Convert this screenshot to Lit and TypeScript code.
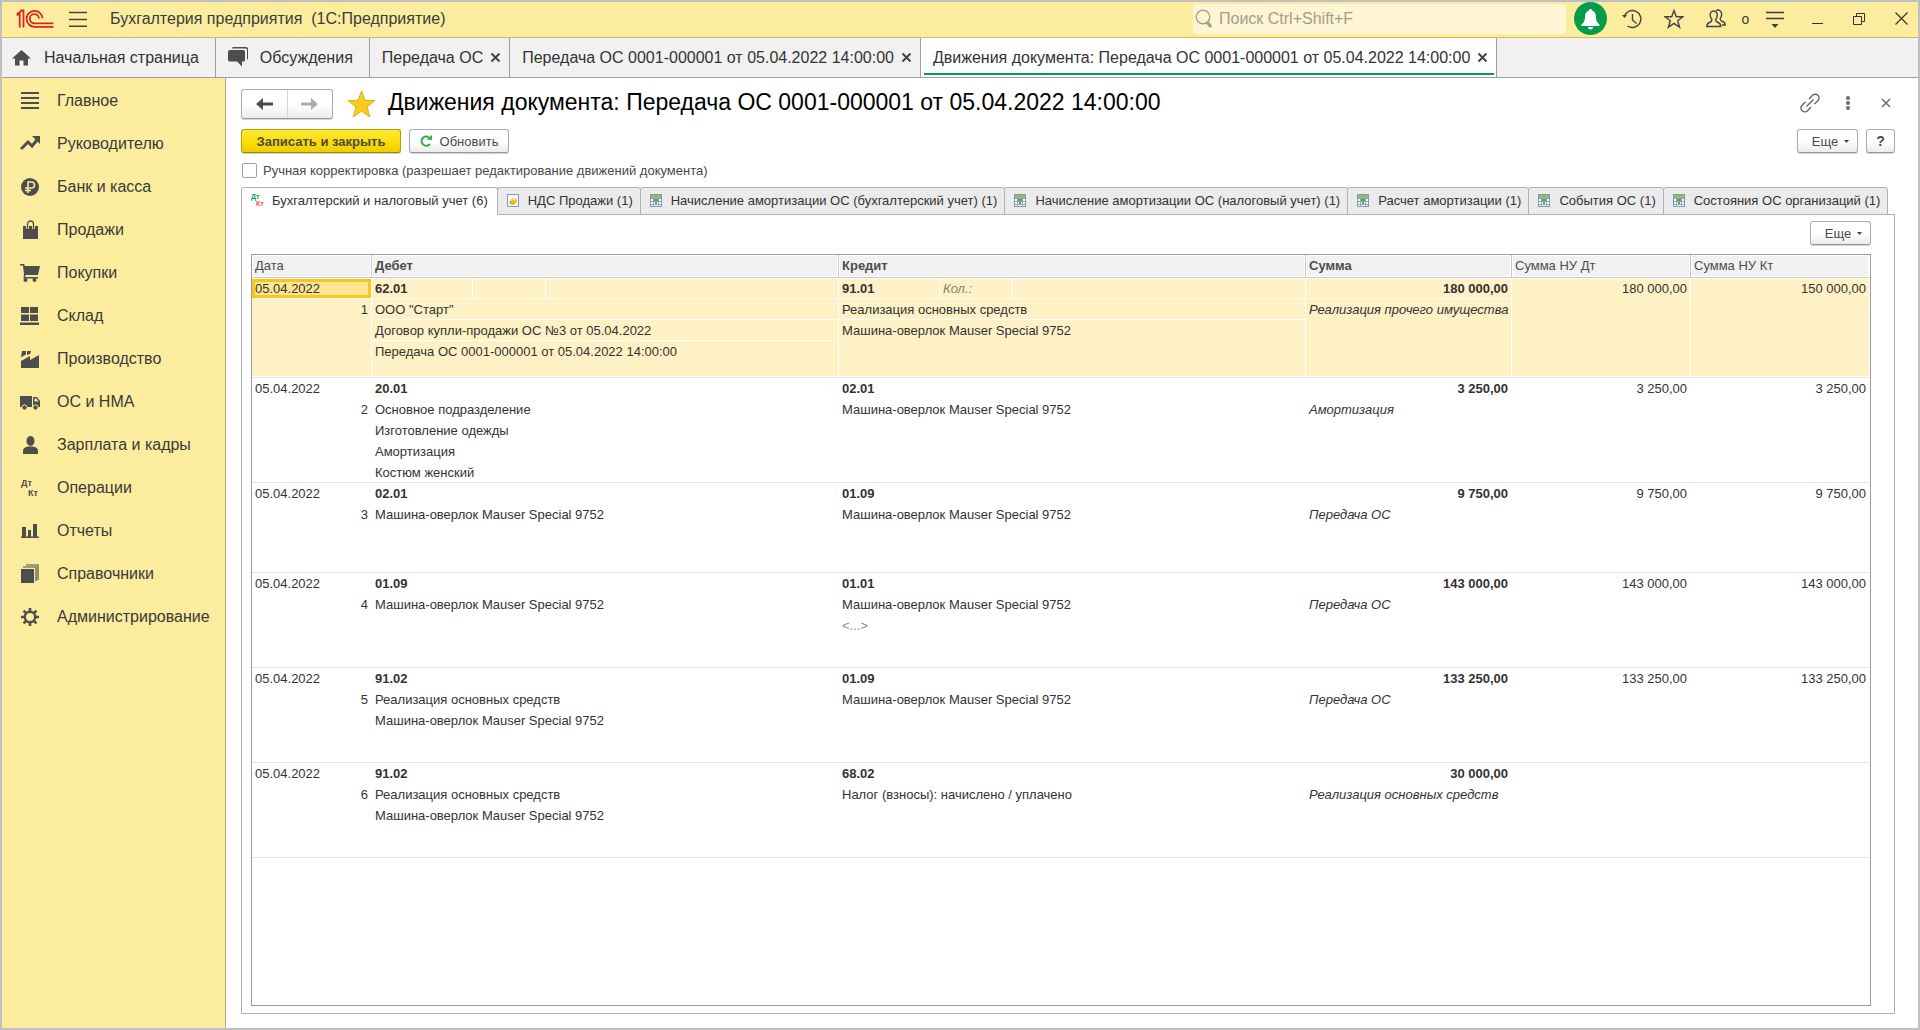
import { LitElement, html, svg, css, nothing, TemplateResult } from "lit";
import { customElement, state } from "lit/decorators.js";
import { classMap } from "lit/directives/class-map.js";

type Icon = TemplateResult;

const navIcons: Record<string, Icon> = {
  main: svg`<path d="M1 2h18M1 7h18M1 12h18M1 17h18" fill="none" stroke="currentColor" stroke-width="2"/>`,
  trend: svg`<path d="M1 15l7-7 4 4 5-6" fill="none" stroke="currentColor" stroke-width="3"/><path d="M12 2h8v8z"/>`,
  ruble: svg`<circle cx="10" cy="10" r="9"/><path d="M8 16V5h3.500a2.800 2.800 0 0 1 0 6H5M5 13.500h6" fill="none" stroke="#fbec9e" stroke-width="1.600"/>`,
  bag: svg`<path d="M3 6h15v13H3z"/><path d="M7.500 9V4a3 3 0 0 1 6 0v5" fill="none" stroke="#fbec9e" stroke-width="3"/><path d="M7.500 9V4a3 3 0 0 1 6 0v5" fill="none" stroke="currentColor" stroke-width="1.300"/>`,
  cart: svg`<path d="M0 1h4l1 2h15l-2 9H5.500L5 14h13v1.500H3.500L4 11 3 2.500H0z"/><circle cx="5.500" cy="17" r="2"/><circle cx="14.500" cy="17" r="2"/>`,
  store: svg`<path d="M1 1h8v6H1zM10 1h8v6h-8zM1 8.500h8V15H1zM10 8.500h8V15h-8zM0 16.500h19V19H0z"/>`,
  factory: svg`<path d="M1 19v-7l9-5v4l9-5v13zM1 8l1-6h4v3.500L1.500 8zM7 2h4l-1 3-3 1z"/>`,
  truck: svg`<path d="M0 4h12v11H0zM13 5h4l3 4v6h-7z"/><path d="M14.500 6.500h2l2 3h-4z" fill="#fbec9e"/><circle cx="4.500" cy="15.500" r="2.600" stroke="#fbec9e"/><circle cx="15.500" cy="15.500" r="2.600" stroke="#fbec9e"/>`,
  person: svg`<ellipse cx="10.500" cy="6" rx="4" ry="5"/><path d="M3 19v-3c0-3 3-4 5-4.500h5c2 .5 5 1.500 5 4.500v3z"/>`,
  dtkt: svg`<text x="1" y="8" font-size="9" font-weight="700" font-family="Liberation Sans, sans-serif">Дт</text><text x="8" y="18" font-size="9" font-weight="700" font-family="Liberation Sans, sans-serif">Кт</text>`,
  chart: svg`<path d="M1 15.500h18V17H1zM2 6h4v10H2zM8 9h3v7H8zM13 3h4v13h-4z"/>`,
  books: svg`<path d="M1 5h13v14H1z"/><path d="M3 3h13v14M6 1h12v15" fill="none" stroke="currentColor" stroke-width="1.200"/>`,
  gear: svg`<circle cx="10" cy="10" r="5.200" fill="none" stroke="currentColor" stroke-width="2.400"/><path d="M10 1v3M10 16v3M1 10h3M16 10h3M3.600 3.600l2.200 2.200M14.200 14.200l2.200 2.200M3.600 16.400l2.200-2.200M14.200 5.800l2.200-2.200" fill="none" stroke="currentColor" stroke-width="2.600"/>`,
};

const sections: [string, string][] = [
  ["main", "Главное"],
  ["trend", "Руководителю"],
  ["ruble", "Банк и касса"],
  ["bag", "Продажи"],
  ["cart", "Покупки"],
  ["store", "Склад"],
  ["factory", "Производство"],
  ["truck", "ОС и НМА"],
  ["person", "Зарплата и кадры"],
  ["dtkt", "Операции"],
  ["chart", "Отчеты"],
  ["books", "Справочники"],
  ["gear", "Администрирование"],
];

const openWindows = [
  { title: "Передача ОС", active: false },
  { title: "Передача ОС 0001-000001 от 05.04.2022 14:00:00", active: false },
  { title: "Движения документа: Передача ОС 0001-000001 от 05.04.2022 14:00:00", active: true },
];

const tabIcons: Record<string, Icon> = {
  dtkt: html`<svg class="tab-icon wide" viewBox="0 0 15 14" aria-hidden="true">
    <text x="0" y="6" font-size="7" font-weight="700" fill="#0a9b52" font-family="Liberation Sans, sans-serif">Дт</text>
    <text x="5" y="13" font-size="7" font-weight="700" fill="#e8504c" font-family="Liberation Sans, sans-serif">Кт</text>
  </svg>`,
  coins: html`<svg class="tab-icon" viewBox="0 0 13 13" aria-hidden="true">
    <rect x=".5" y=".5" width="11" height="12" fill="#f4f7fa" stroke="#7f9db9"/>
    <ellipse cx="5.500" cy="8.500" rx="3" ry="2" fill="#e0a020"/><ellipse cx="7" cy="6.500" rx="3" ry="2.500" fill="#f0bd3a"/><ellipse cx="7" cy="5" rx="2" ry="1" fill="#fbe08a"/>
  </svg>`,
  register: html`<svg class="tab-icon" viewBox="0 0 13 13" aria-hidden="true">
    <rect x=".5" y=".5" width="11" height="12" fill="#fff" stroke="#8099b0"/>
    <path d="M1 4.500h10M1 7.500h10M1 10.500h10M3.500 3v10M8.500 3v10" stroke="#93a7ba" fill="none"/>
    <path d="M1 1h10v3H1z" fill="#8cc070"/><path d="M4 5h4v2H4zM5 8h2v2H5z" fill="#5f9f4d"/>
  </svg>`,
};

const registers: { icon: string; title: string; count: number }[] = [
  { icon: "dtkt", title: "Бухгалтерский и налоговый учет", count: 6 },
  { icon: "coins", title: "НДС Продажи", count: 1 },
  { icon: "register", title: "Начисление амортизации ОС (бухгалтерский учет)", count: 1 },
  { icon: "register", title: "Начисление амортизации ОС (налоговый учет)", count: 1 },
  { icon: "register", title: "Расчет амортизации", count: 1 },
  { icon: "register", title: "События ОС", count: 1 },
  { icon: "register", title: "Состояния ОС организаций", count: 1 },
];

interface Entry {
  date: string;
  debit: string;
  debitLines: string[];
  credit: string;
  creditLines: string[];
  quantity?: boolean;
  sum: string;
  note: string;
  taxDebit: string;
  taxCredit: string;
  size: "tall" | "medium" | "short";
}

const MACHINE = "Машина-оверлок Mauser Special 9752";

const entries: Entry[] = [
  {
    date: "05.04.2022", debit: "62.01",
    debitLines: ['ООО "Старт"', "Договор купли-продажи ОС №3 от 05.04.2022", "Передача ОС 0001-000001 от 05.04.2022 14:00:00"],
    credit: "91.01", creditLines: ["Реализация основных средств", MACHINE], quantity: true,
    sum: "180 000,00", note: "Реализация прочего имущества", taxDebit: "180 000,00", taxCredit: "150 000,00", size: "tall",
  },
  {
    date: "05.04.2022", debit: "20.01",
    debitLines: ["Основное подразделение", "Изготовление одежды", "Амортизация", "Костюм женский"],
    credit: "02.01", creditLines: [MACHINE],
    sum: "3 250,00", note: "Амортизация", taxDebit: "3 250,00", taxCredit: "3 250,00", size: "medium",
  },
  {
    date: "05.04.2022", debit: "02.01", debitLines: [MACHINE], credit: "01.09", creditLines: [MACHINE],
    sum: "9 750,00", note: "Передача ОС", taxDebit: "9 750,00", taxCredit: "9 750,00", size: "short",
  },
  {
    date: "05.04.2022", debit: "01.09", debitLines: [MACHINE], credit: "01.01", creditLines: [MACHINE, "<...>"],
    sum: "143 000,00", note: "Передача ОС", taxDebit: "143 000,00", taxCredit: "143 000,00", size: "medium",
  },
  {
    date: "05.04.2022", debit: "91.02", debitLines: ["Реализация основных средств", MACHINE],
    credit: "01.09", creditLines: [MACHINE],
    sum: "133 250,00", note: "Передача ОС", taxDebit: "133 250,00", taxCredit: "133 250,00", size: "medium",
  },
  {
    date: "05.04.2022", debit: "91.02", debitLines: ["Реализация основных средств", MACHINE],
    credit: "68.02", creditLines: ["Налог (взносы): начислено / уплачено"],
    sum: "30 000,00", note: "Реализация основных средств", taxDebit: "", taxCredit: "", size: "medium",
  },
];

const base = css`
  *, *::before, *::after { box-sizing: border-box; }
  button { font: inherit; color: inherit; background: none; border: 0; padding: 0; margin: 0; }
  a { color: inherit; text-decoration: none; }
  svg { display: block; flex: none; }
`;

@customElement("title-bar")
class TitleBar extends LitElement {
  static styles = [base, css`
    :host { display: flex; align-items: center; box-sizing: border-box; height: 36px; padding-bottom: 2px; background: #fbec9e; border-bottom: 1px solid #ccbd62; font-size: 16px; color: #3c3c3c; }
    .logo { width: 38px; height: 20px; margin-left: 14px; }
    .menu { margin-left: 15px; }
    .caption { margin-left: 23px; flex: 1; white-space: pre; }
    .search { display: flex; align-items: center; gap: 5px; width: 373px; height: 30px; padding-left: 2px; background: #fdf5d3; border-radius: 2px; color: #a29d88; }
    .search input { flex: 1; min-width: 0; border: 0; outline: 0; background: none; font: inherit; color: inherit; padding: 0; }
    .search input::placeholder { color: inherit; opacity: 1; }
    .bell { width: 33px; height: 33px; margin: 0 4px 0 8px; }
    .tool { display: flex; align-items: center; justify-content: center; width: 42px; height: 33px; }
    .count { width: 17px; text-align: center; font-size: 14px; }
    .close { width: 38px; justify-content: flex-end; padding-right: 10px; }
  `];

  render() {
    return html`
      <svg class="logo" viewBox="0 0 38 20" fill="none" stroke="#d9251d" stroke-width="1.800" role="img" aria-label="1C">
        <path d="M.5 5.500h3.200V18.500M1 4.500c2 0 3.500-1.200 4-3h2.500v17"/>
        <path d="M26.500 9.200a8 8 0 1 0-8 8.600H37.500"/>
        <path d="M23 9.500a4.600 4.600 0 1 0-4.500 4.800H37.500"/>
      </svg>
      <button class="menu" aria-label="Меню"><svg width="18" height="16" viewBox="0 0 18 16"><path d="M0 1.500h18M0 8.500h18M0 15.200h18" stroke="#444" stroke-width="1.400"/></svg></button>
      <span class="caption">Бухгалтерия предприятия  (1С:Предприятие)</span>
      <label class="search">
        <svg width="19" height="20" viewBox="0 0 19 20" fill="none" stroke="currentColor"><circle cx="8" cy="8" r="6.800" stroke-width="1.300"/><path d="M12 13l4 5" stroke-width="3"/></svg>
        <input type="text" placeholder="Поиск Ctrl+Shift+F" aria-label="Поиск" />
      </label>
      <button class="bell" aria-label="Уведомления"><svg width="33" height="33" viewBox="0 0 33 33"><circle cx="16.500" cy="16.500" r="16.500" fill="#059b4a"/><path d="M16.500 7c1 0 1.500.7 1.500 1.500 2.800.8 4 3.500 4 6.500 0 3.500 1 5.500 3.500 7.500v1.500h-18v-1.500C10 20.500 11 18.500 11 15c0-3 1.200-5.700 4-6.500C15 7.700 15.500 7 16.500 7zM14 25h5c0 1.500-1 2.500-2.500 2.500S14 26.500 14 25z" fill="#fff"/></svg></button>
      <button class="tool" aria-label="История"><svg width="20" height="20" viewBox="0 0 20 20" fill="none" stroke="#444" stroke-width="1.400"><path d="M2.200 7.500A8.500 8.500 0 1 1 5.500 17M10.500 5v6l4 3.500"/><path d="M0 6l2.500 3L5 6z" fill="#444" stroke="none"/></svg></button>
      <button class="tool" aria-label="Избранное"><svg width="20" height="20" viewBox="0 0 20 20" fill="none" stroke="#444" stroke-width="1.400"><path d="M10 1.500l2.300 6.200h6.600l-5.200 4.100 1.900 6.400-5.600-3.800-5.600 3.800 1.900-6.400L1.100 7.700h6.600z"/></svg></button>
      <button class="tool" aria-label="Пользователи"><svg width="20" height="19" viewBox="0 0 20 19" fill="none" stroke="#444" stroke-width="1.400"><path d="M7.500 2C5 2 4 4 4.200 6.500c.2 2 .8 3 1.800 4 0 2-.5 2.200-2.500 3C1.500 14.200.8 15 .8 17.500h14c0-2.500-.7-3.300-2.700-4-2-.8-2.500-1-2.500-3 1-1 1.600-2 1.700-4C11.500 4 10 2 7.500 2z"/><path d="M10 1.500c3-1.500 6 .5 5.600 4.500-.2 2-.6 2.700-1.400 3.500 0 2 .3 2.200 2.300 3 2 .7 2.700 1.500 2.700 3.500H16"/></svg></button>
      <span class="count">o</span>
      <button class="tool" aria-label="Сервис"><svg width="18" height="18" viewBox="0 0 18 18"><path d="M0 2.500h18M0 8.500h18" stroke="#3c3c3c" stroke-width="1.400"/><path d="M5.500 14h7L9 18z" fill="#3c3c3c"/></svg></button>
      <button class="tool" aria-label="Свернуть"><svg width="12" height="12" viewBox="0 0 12 12"><path d="M1 10.500h11" stroke="#333"/></svg></button>
      <button class="tool" aria-label="Восстановить"><svg width="12" height="12" viewBox="0 0 12 12" fill="none" stroke="#333"><path d="M.5 3.500h8v8h-8zM3.500 3V.5h8v8H9"/></svg></button>
      <button class="tool close" aria-label="Закрыть"><svg width="13" height="13" viewBox="0 0 13 13"><path d="M.5.5l12 12M12.500.5l-12 12" stroke="#333" stroke-width="1.200"/></svg></button>
    `;
  }
}

@customElement("window-tabs")
class WindowTabs extends LitElement {
  static styles = [base, css`
    :host { display: flex; box-sizing: border-box; height: 40px; background: #f1f1f1; border-bottom: 1px solid #a0a0a0; font-size: 16px; color: #333; }
    .tab { display: flex; align-items: center; border-right: 1px solid #a0a0a0; white-space: nowrap; }
    .home { gap: 13px; padding: 0 16px 0 10px; }
    .talk { gap: 11px; padding: 0 16px 0 12px; }
    .doc { gap: 7px; padding: 0 8px 0 12px; }
    .active { background: linear-gradient(#059b4a, #059b4a) 3px 35px / calc(100% - 5px) 2px no-repeat, #fff; }
  `];

  render() {
    return html`
      <a class="tab home" href="#home"><svg width="19" height="16" viewBox="0 0 19 16" fill="#4d4d4d"><path d="M9.500 0L19 8.500h-3V15.500h-4.500v-5h-4v5H3V8.500H0z"/></svg>Начальная страница</a>
      <a class="tab talk" href="#talk"><svg width="21" height="21" viewBox="0 0 21 21" fill="#4d4d4d"><path d="M5 0h13q2 0 2 2v9q0 1.500-1 1.500V3q0-1.500-1.500-1.500H4Q4 0 5 0z"/><path d="M2 3h13.500q1.500 0 1.500 1.500V13q0 1.500-1.500 1.500H14v5L9 14.500H2Q0 14.500 0 13V4.500Q0 3 2 3z"/></svg>Обсуждения</a>
      ${openWindows.map((w) => html`
        <div class=${classMap({ tab: true, doc: true, active: w.active })}>
          <a href="#window">${w.title}</a>
          <button aria-label="Закрыть вкладку"><svg width="11" height="11" viewBox="0 0 11 11"><path d="M1.500 1.500l8 8M9.500 1.500l-8 8" stroke="#444" stroke-width="2"/></svg></button>
        </div>`)}
    `;
  }
}

@customElement("section-panel")
class SectionPanel extends LitElement {
  static styles = [base, css`
    :host { display: block; box-sizing: border-box; width: 224px; flex: none; padding-top: 1px; background: #fbec9e; border-right: 1px solid #b5ae78; font-size: 16px; color: #3a3a3a; }
    .item { display: flex; align-items: center; gap: 17px; height: 43px; padding-left: 18px; white-space: nowrap; }
    .icon { width: 20px; height: 20px; fill: currentColor; color: #4d4d4d; }
  `];

  render() {
    return html`<nav>${sections.map(([icon, label]) => html`
      <a class="item" href="#${icon}"><svg class="icon" viewBox="0 0 20 20" aria-hidden="true">${navIcons[icon]}</svg>${label}</a>`)}</nav>`;
  }
}

@customElement("entries-table")
class EntriesTable extends LitElement {
  @state() selected = 0;

  static styles = [base, css`
    :host { display: block; flex: 1; border: 1px solid #9c9c9c; color: #333; }
    table { width: 100%; table-layout: fixed; border-collapse: separate; border-spacing: 0; }
    .c-date { width: 120px; }
    .c-sum { width: 206px; }
    .c-tax { width: 179px; }
    th { height: 23px; padding: 0 3px; text-align: left; font-weight: 400; color: #4d4d4d; background: #f1f1f1; border-right: 1px solid #c8c8c8; border-bottom: 1px solid #c8cacc; box-shadow: inset 1px 1px #fff, inset -1px -1px #fff; line-height: 20px; }
    th:last-child { border-right-color: #fff; }
    .strong { font-weight: 700; }
    td { padding: 0; vertical-align: top; border-right: 1px solid transparent; border-bottom: 1px solid #e4e4e4; }
    .tall { height: 100px; }
    .medium { height: 95px; }
    .short { height: 90px; }
    .line { height: 21px; line-height: 22px; padding: 0 3px; white-space: nowrap; border-bottom: 1px solid transparent; }
    .line:last-child { height: 20px; }
    .num { text-align: right; }
    .note { font-style: italic; }
    .muted { color: #8a8a9a; }
    .account { display: flex; padding: 0; }
    .account > span { padding: 0 3px; border-right: 1px solid transparent; }
    .code { width: 101px; }
    .qty { width: 73px; font-style: italic; color: #8a8265; }
    .selected td { background: #fdf1c5; border-right-color: #fff; box-shadow: inset 0 1px #fff, inset 0 -1px #fff; }
    .selected .line { height: 21px; }
    .selected .split .line:not(:last-child) { border-bottom-color: #fff; }
    .selected .account > span { border-right-color: #fff; }
    .selected .account > .rest { border-right-color: transparent; }
    .selected .current { position: relative; border-bottom-color: #fff; }
    .selected .current::before { content: ""; position: absolute; inset: 1px 0 0 0; border: 3px solid #f9c51f; background: #fee590; z-index: -1; }
    .selected .date { position: relative; z-index: 0; }
  `];

  account(code: string, qty: boolean) {
    return html`<div class="line account"><span class="code strong">${code}</span><span class="qty">${qty ? "Кол.:" : nothing}</span><span class="rest"></span></div>`;
  }

  render() {
    return html`
      <table>
        <colgroup><col class="c-date"><col><col><col class="c-sum"><col class="c-tax"><col class="c-tax"></colgroup>
        <thead><tr>
          <th>Дата</th><th class="strong">Дебет</th><th class="strong">Кредит</th><th class="strong">Сумма</th><th>Сумма НУ Дт</th><th>Сумма НУ Кт</th>
        </tr></thead>
        <tbody>${entries.map((e, i) => html`
          <tr class=${classMap({ [e.size]: true, selected: i === this.selected })} @click=${() => (this.selected = i)}>
            <td class="date"><div class="line current">${e.date}</div><div class="line num">${i + 1}</div></td>
            <td class="split">${this.account(e.debit, false)}${e.debitLines.map((l) => html`<div class="line">${l}</div>`)}</td>
            <td class="split">${this.account(e.credit, !!e.quantity)}${e.creditLines.map((l) => html`<div class=${classMap({ line: true, muted: l.startsWith("<") })}>${l}</div>`)}</td>
            <td class="split"><div class="line num strong">${e.sum}</div><div class="line note">${e.note}</div></td>
            <td><div class="line num">${e.taxDebit}</div></td>
            <td><div class="line num">${e.taxCredit}</div></td>
          </tr>`)}</tbody>
      </table>`;
  }
}

@customElement("document-form")
class DocumentForm extends LitElement {
  @state() tab = 0;

  static styles = [base, css`
    :host { display: flex; flex-direction: column; flex: 1; min-width: 0; padding: 10px 23px 14px 15px; background: #fff; font-size: 13px; color: #4a4a4a; }
    .head { display: flex; align-items: center; height: 31px; margin-right: -10px; }
    .history, .btn { border: 1px solid #adadad; border-bottom-color: #999; border-radius: 3px; background: linear-gradient(#fff 50%, #ececec); box-shadow: 0 1px 1px #cfcfcf; }
    .history { display: flex; width: 92px; height: 30px; }
    .history button { flex: 1; display: flex; align-items: center; justify-content: center; color: #4d4d4d; }
    .history button + button { border-left: 1px solid #d4d4d4; color: #acacac; }
    .star { margin-left: 14px; }
    h1 { margin: 0; margin-left: 12px; flex: 1; font-size: 23px; line-height: 29px; padding-bottom: 2px; font-weight: 400; color: #000; white-space: nowrap; }
    .tool { display: flex; align-items: center; justify-content: center; width: 38px; height: 30px; padding-bottom: 2px; color: #6a6a6a; }
    .bar { display: flex; align-items: center; gap: 8px; margin-top: 10px; }
    .btn { display: flex; align-items: center; justify-content: center; height: 24px; white-space: nowrap; }
    .primary { width: 160px; font-weight: 700; background: linear-gradient(#ffe93a, #fbdc00 60%, #ecce00); border-color: #b5a000; border-bottom-color: #998700; }
    .refresh { width: 100px; gap: 8px; }
    .more { width: 61px; gap: 6px; padding-left: 6px; }
    .help { width: 29px; font-weight: 700; font-size: 14px; }
    .push { margin-left: auto; }
    .check { display: flex; align-items: center; gap: 6px; margin-top: 9px; height: 17px; }
    .check input { appearance: none; width: 15px; height: 15px; margin: 0 0 0 1px; border: 1px solid #a0a0a0; border-radius: 2px; background: #fff; }
    .check input:checked { background: #fbdc00; }
    .tabs { display: flex; margin-top: 8px; position: relative; color: #333; }
    .tab { display: flex; align-items: center; gap: 8px; height: 28px; padding: 0 7px 2px 9px; margin-right: -1px; border: 1px solid #b0b0b0; border-radius: 3px 3px 0 0; background: #ebebeb; white-space: nowrap; }
    .tab.on { padding-right: 9px; background: #fff; border-bottom-color: #fff; }
    .tab-icon { width: 13px; height: 13px; }
    .tab-icon.wide { width: 15px; height: 14px; margin-right: -2px; }
    .panel { display: flex; flex-direction: column; flex: 1; margin-top: -1px; border: 1px solid #b0b0b0; padding: 6px 23px 7px 9px; }
    .panel .btn { align-self: flex-end; margin-bottom: 9px; }
  `];

  more() {
    return html`<button class="btn more push">Еще<svg width="5" height="3" viewBox="0 0 5 3"><path d="M0 0h5L2.500 3z" fill="#444"/></svg></button>`;
  }

  render() {
    const arrow = "M0 6l7-6v4.500h10v3H7V12z";
    return html`
      <div class="head">
        <div class="history">
          <button aria-label="Назад"><svg width="17" height="12" viewBox="0 0 17 12"><path d=${arrow} fill="currentColor"/></svg></button>
          <button aria-label="Вперед"><svg width="17" height="12" viewBox="0 0 17 12"><path d=${arrow} fill="currentColor" transform="matrix(-1 0 0 1 17 0)"/></svg></button>
        </div>
        <svg class="star" width="29" height="28" viewBox="0 0 29 28"><path d="M14.500 1l3.400 9.300 10.100.3-8 6.200 2.900 10.200-8.400-5.900-8.400 5.900L9 16.800 1 10.600l10.100-.3z" fill="#fbcb1e" stroke="#e0ae12"/></svg>
        <h1>Движения документа: Передача ОС 0001-000001 от 05.04.2022 14:00:00</h1>
        <button class="tool" aria-label="Ссылка"><svg width="20" height="20" viewBox="0 0 20 20" fill="none" stroke="currentColor" stroke-width="1.500"><path d="M6.500 13.500l7-7M9 6l3.500-3.700a3.800 3.800 0 0 1 5.400 5.400L14.500 11M11 14l-3.500 3.700a3.800 3.800 0 0 1-5.400-5.400L5.500 9"/></svg></button>
        <button class="tool" aria-label="Действия"><svg width="4" height="14" viewBox="0 0 4 14" fill="currentColor"><circle cx="2" cy="2" r="2"/><circle cx="2" cy="7" r="2"/><circle cx="2" cy="12" r="2"/></svg></button>
        <button class="tool" aria-label="Закрыть"><svg width="10" height="10" viewBox="0 0 10 10"><path d="M1 1l8 8M9 1l-8 8" stroke="currentColor" stroke-width="1.500"/></svg></button>
      </div>
      <div class="bar">
        <button class="btn primary">Записать и закрыть</button>
        <button class="btn refresh"><svg width="12" height="12" viewBox="0 0 12 12"><path d="M9.800 9A4.600 4.600 0 1 1 8.800 2.300" fill="none" stroke="#35a845" stroke-width="2"/><path d="M6.500 4.500L12 5V0z" fill="#35a845"/></svg>Обновить</button>
        ${this.more()}
        <button class="btn help">?</button>
      </div>
      <label class="check"><input type="checkbox">Ручная корректировка (разрешает редактирование движений документа)</label>
      <div class="tabs" role="tablist">${registers.map((r, i) => html`
        <button class=${classMap({ tab: true, on: i === this.tab })} role="tab" aria-selected=${i === this.tab} @click=${() => (this.tab = i)}>${tabIcons[r.icon]}${r.title} (${r.count})</button>`)}
      </div>
      <div class="panel">
        ${this.more()}
        <entries-table></entries-table>
      </div>`;
  }
}

@customElement("app-root")
class AppRoot extends LitElement {
  static styles = [base, css`
    :host { display: flex; flex-direction: column; box-sizing: border-box; min-height: 100vh; border: 2px solid #c0c0c0; background: #fff; font-family: "Liberation Sans", Arial, sans-serif; }
    .body { display: flex; flex: 1; }
  `];

  render() {
    return html`
      <title-bar></title-bar>
      <window-tabs></window-tabs>
      <div class="body">
        <section-panel></section-panel>
        <document-form></document-form>
      </div>`;
  }
}
